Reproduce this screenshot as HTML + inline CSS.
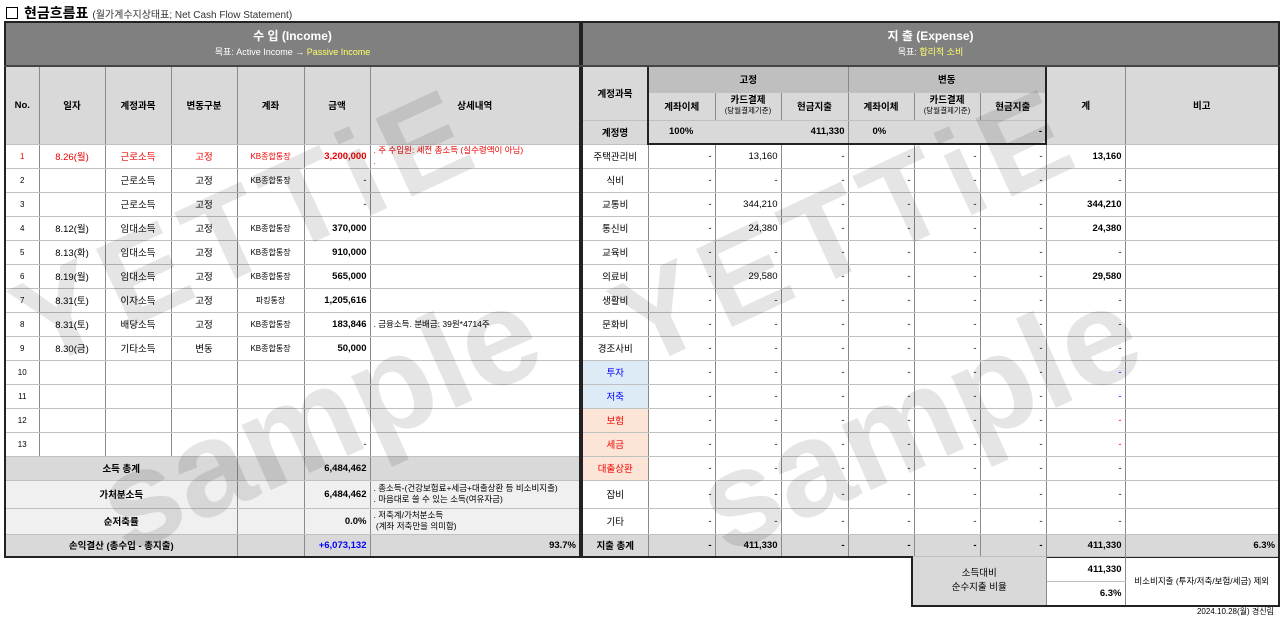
<!DOCTYPE html>
<html><head><meta charset="utf-8">
<style>
*{margin:0;padding:0;box-sizing:border-box}
body{width:1280px;height:620px;background:#fff;position:relative;overflow:hidden;font-family:"Liberation Sans","Noto Sans CJK KR",sans-serif;font-size:10px;color:#000}
.title{position:absolute;left:6px;top:3px;font-size:14px;font-weight:bold;display:flex;align-items:center}
.title .box{width:12px;height:12px;border:1.5px solid #000;margin-right:6px}
.title small{font-size:10px;font-weight:normal;color:#333;margin-left:4px}
table{position:absolute;border-collapse:collapse;table-layout:fixed;border:2px solid #222}
td{border-left:1px solid #8a8a8a;border-right:1px solid #8a8a8a;border-top:1px solid #c0c0c0;border-bottom:1px solid #c0c0c0;text-align:center;vertical-align:middle;overflow:hidden;white-space:nowrap;font-size:9.5px;padding:0 3px}
.hd{background:#808080;color:#fff;font-size:12px;font-weight:bold;line-height:16px;border-bottom:2px solid #444}
.hd span{display:block;font-size:9px;font-weight:normal}
.y{color:#ffff66}
.g{background:#d9d9d9;font-weight:bold}
.lg{background:#f0f0f0}
.r{text-align:right}
.l{text-align:left}
.b{font-weight:bold}
.red{color:#e00}
.blue{color:#00f}
.sm{font-size:8px}
.pk{background:#fce4d6;color:#e00}
.bl{background:#ddebf7;color:#00f}
.det{font-size:8.5px;text-align:left;line-height:11px}
.wm{position:absolute;left:0;top:0;pointer-events:none}
</style></head><body>
<div class="title"><div class="box"></div>현금흐름표<small>(월가계수지상태표; Net Cash Flow Statement)</small></div>

<table style="left:4px;top:21px;width:575px">
<colgroup><col style="width:34px"><col style="width:66px"><col style="width:66px"><col style="width:66px"><col style="width:67px"><col style="width:66px"><col style="width:210px"></colgroup>
<tr style="height:44px"><td colspan="7" class="hd">수 입 (Income)<span>목표: Active Income → <b class="y" style="font-weight:normal">Passive Income</b></span></td></tr>
<tr style="height:78px"><td class="g">No.</td><td class="g">일자</td><td class="g">계정과목</td><td class="g">변동구분</td><td class="g">계좌</td><td class="g">금액</td><td class="g">상세내역</td></tr>
<tr style="height:24px" class="red"><td class="sm">1</td><td>8.26(월)</td><td>근로소득</td><td>고정</td><td class="sm">KB종합통장</td><td class="r b">3,200,000</td><td class="det" style="vertical-align:top">. 주 수입원: 세전 총소득 (실수령액이 아님)<br>.</td></tr>
<tr style="height:24px"><td class="sm">2</td><td></td><td>근로소득</td><td>고정</td><td class="sm">KB종합통장</td><td class="r">-</td><td></td></tr>
<tr style="height:24px"><td class="sm">3</td><td></td><td>근로소득</td><td>고정</td><td></td><td class="r">-</td><td></td></tr>
<tr style="height:24px"><td class="sm">4</td><td>8.12(월)</td><td>임대소득</td><td>고정</td><td class="sm">KB종합통장</td><td class="r b">370,000</td><td></td></tr>
<tr style="height:24px"><td class="sm">5</td><td>8.13(화)</td><td>임대소득</td><td>고정</td><td class="sm">KB종합통장</td><td class="r b">910,000</td><td></td></tr>
<tr style="height:24px"><td class="sm">6</td><td>8.19(월)</td><td>임대소득</td><td>고정</td><td class="sm">KB종합통장</td><td class="r b">565,000</td><td></td></tr>
<tr style="height:24px"><td class="sm">7</td><td>8.31(토)</td><td>이자소득</td><td>고정</td><td class="sm">파킹통장</td><td class="r b">1,205,616</td><td></td></tr>
<tr style="height:24px"><td class="sm">8</td><td>8.31(토)</td><td>배당소득</td><td>고정</td><td class="sm">KB종합통장</td><td class="r b">183,846</td><td class="det">. 금융소득. 분배금: 39원*4714주</td></tr>
<tr style="height:24px"><td class="sm">9</td><td>8.30(금)</td><td>기타소득</td><td>변동</td><td class="sm">KB종합통장</td><td class="r b">50,000</td><td></td></tr>
<tr style="height:24px"><td class="sm">10</td><td></td><td></td><td></td><td></td><td></td><td></td></tr>
<tr style="height:24px"><td class="sm">11</td><td></td><td></td><td></td><td></td><td></td><td></td></tr>
<tr style="height:24px"><td class="sm">12</td><td></td><td></td><td></td><td></td><td></td><td></td></tr>
<tr style="height:24px"><td class="sm">13</td><td></td><td></td><td></td><td></td><td class="r">-</td><td></td></tr>
<tr style="height:24px" class="g"><td colspan="4" class="g">소득 총계</td><td class="g"></td><td class="g r">6,484,462</td><td class="g"></td></tr>
<tr style="height:28px" class="lg"><td colspan="4" class="b">가처분소득</td><td></td><td class="r b">6,484,462</td><td class="det">. 총소득-(건강보험료+세금+대출상환 등 비소비지출)<br>. 마음대로 쓸 수 있는 소득(여유자금)</td></tr>
<tr style="height:26px" class="lg"><td colspan="4" class="b">순저축률</td><td></td><td class="r b">0.0%</td><td class="det">. 저축계/가처분소득<br>&nbsp;(계좌 저축만을 의미함)</td></tr>
<tr style="height:23px"><td colspan="4" class="g">손익결산 (총수입 - 총지출)</td><td class="g"></td><td class="g r blue">+6,073,132</td><td class="g r">93.7%</td></tr>
</table>

<table style="left:581px;top:21px;width:697px">
<colgroup><col style="width:66px"><col style="width:67px"><col style="width:66px"><col style="width:67px"><col style="width:66px"><col style="width:66px"><col style="width:66px"><col style="width:79px"><col style="width:154px"></colgroup>
<tr style="height:44px"><td colspan="9" class="hd">지 출 (Expense)<span>목표: <b class="y" style="font-weight:normal">합리적 소비</b></span></td></tr>
<tr style="height:26px"><td rowspan="2" class="g">계정과목</td><td colspan="3" class="g" style="background:#bfbfbf;border-top:2px solid #222;border-left:2px solid #222">고정</td><td colspan="3" class="g" style="background:#bfbfbf;border-top:2px solid #222;border-right:2px solid #222">변동</td><td rowspan="3" class="g">계</td><td rowspan="3" class="g">비고</td></tr>
<tr style="height:28px"><td class="g" style="border-left:2px solid #222">계좌이체</td><td class="g" style="line-height:10px">카드결제<br><span style="font-size:7.5px;font-weight:normal">(당월결제기준)</span></td><td class="g">현금지출</td><td class="g">계좌이체</td><td class="g" style="line-height:10px">카드결제<br><span style="font-size:7.5px;font-weight:normal">(당월결제기준)</span></td><td class="g" style="border-right:2px solid #222">현금지출</td></tr>
<tr style="height:24px"><td class="g">계정명</td><td class="g l" style="border-left:2px solid #222;border-bottom:2px solid #222;padding-left:20px;border-right:none">100%</td><td class="g" style="border-bottom:2px solid #222;border-left:none;border-right:none"></td><td class="g r" style="border-bottom:2px solid #222;border-left:none">411,330</td><td class="g l" style="border-bottom:2px solid #222;padding-left:24px;border-right:none">0%</td><td class="g" style="border-bottom:2px solid #222;border-left:none;border-right:none"></td><td class="g r" style="border-bottom:2px solid #222;border-right:2px solid #222;border-left:none">-</td></tr>
<tr style="height:24px"><td>주택관리비</td><td class="r">-</td><td class="r">13,160</td><td class="r">-</td><td class="r">-</td><td class="r">-</td><td class="r">-</td><td class="r b">13,160</td><td></td></tr>
<tr style="height:24px"><td>식비</td><td class="r">-</td><td class="r">-</td><td class="r">-</td><td class="r">-</td><td class="r">-</td><td class="r">-</td><td class="r">-</td><td></td></tr>
<tr style="height:24px"><td>교통비</td><td class="r">-</td><td class="r">344,210</td><td class="r">-</td><td class="r">-</td><td class="r">-</td><td class="r">-</td><td class="r b">344,210</td><td></td></tr>
<tr style="height:24px"><td>통신비</td><td class="r">-</td><td class="r">24,380</td><td class="r">-</td><td class="r">-</td><td class="r">-</td><td class="r">-</td><td class="r b">24,380</td><td></td></tr>
<tr style="height:24px"><td>교육비</td><td class="r">-</td><td class="r">-</td><td class="r">-</td><td class="r">-</td><td class="r">-</td><td class="r">-</td><td class="r">-</td><td></td></tr>
<tr style="height:24px"><td>의료비</td><td class="r">-</td><td class="r">29,580</td><td class="r">-</td><td class="r">-</td><td class="r">-</td><td class="r">-</td><td class="r b">29,580</td><td></td></tr>
<tr style="height:24px"><td>생활비</td><td class="r">-</td><td class="r">-</td><td class="r">-</td><td class="r">-</td><td class="r">-</td><td class="r">-</td><td class="r">-</td><td></td></tr>
<tr style="height:24px"><td>문화비</td><td class="r">-</td><td class="r">-</td><td class="r">-</td><td class="r">-</td><td class="r">-</td><td class="r">-</td><td class="r">-</td><td></td></tr>
<tr style="height:24px"><td>경조사비</td><td class="r">-</td><td class="r">-</td><td class="r">-</td><td class="r">-</td><td class="r">-</td><td class="r">-</td><td class="r">-</td><td></td></tr>
<tr style="height:24px"><td class="bl">투자</td><td class="r">-</td><td class="r">-</td><td class="r">-</td><td class="r">-</td><td class="r">-</td><td class="r">-</td><td class="r blue">-</td><td></td></tr>
<tr style="height:24px"><td class="bl">저축</td><td class="r">-</td><td class="r">-</td><td class="r">-</td><td class="r">-</td><td class="r">-</td><td class="r">-</td><td class="r blue">-</td><td></td></tr>
<tr style="height:24px"><td class="pk">보험</td><td class="r">-</td><td class="r">-</td><td class="r">-</td><td class="r">-</td><td class="r">-</td><td class="r">-</td><td class="r red">-</td><td></td></tr>
<tr style="height:24px"><td class="pk">세금</td><td class="r">-</td><td class="r">-</td><td class="r">-</td><td class="r">-</td><td class="r">-</td><td class="r">-</td><td class="r red">-</td><td></td></tr>
<tr style="height:24px"><td class="pk">대출상환</td><td class="r">-</td><td class="r">-</td><td class="r">-</td><td class="r">-</td><td class="r">-</td><td class="r">-</td><td class="r">-</td><td></td></tr>
<tr style="height:28px"><td>잡비</td><td class="r">-</td><td class="r">-</td><td class="r">-</td><td class="r">-</td><td class="r">-</td><td class="r">-</td><td class="r">-</td><td></td></tr>
<tr style="height:26px"><td>기타</td><td class="r">-</td><td class="r">-</td><td class="r">-</td><td class="r">-</td><td class="r">-</td><td class="r">-</td><td class="r">-</td><td></td></tr>
<tr style="height:23px"><td class="g">지출 총계</td><td class="g r">-</td><td class="g r">411,330</td><td class="g r">-</td><td class="g r">-</td><td class="g r">-</td><td class="g r">-</td><td class="g r">411,330</td><td class="g r">6.3%</td></tr>
</table>

<table style="left:911px;top:556px;width:367px;border-top:none">
<colgroup><col style="width:134px"><col style="width:79px"><col style="width:154px"></colgroup>
<tr style="height:25px"><td rowspan="2" class="g" style="line-height:14px;font-weight:normal">소득대비<br>순수지출 비율</td><td class="r b">411,330</td><td rowspan="2" style="font-size:8.5px;border-right:none">비소비지출 (투자/저축/보험/세금) 제외</td></tr>
<tr style="height:24px"><td class="r b">6.3%</td></tr>
</table>
<div style="position:absolute;right:6px;top:606px;font-size:8px;color:#000">2024.10.28(월) 경신림</div>

<svg class="wm" width="1280" height="620" xmlns="http://www.w3.org/2000/svg">
<g fill="#000" fill-opacity="0.1" font-family="Liberation Sans, sans-serif" font-weight="bold">
<text font-size="125" letter-spacing="10" transform="translate(40,370) rotate(-25)">YETTiE</text>
<text font-size="135" transform="translate(125,555) rotate(-24)">sample</text>
<text font-size="125" letter-spacing="10" transform="translate(640,370) rotate(-25)">YETTiE</text>
<text font-size="135" transform="translate(725,555) rotate(-24)">sample</text>
</g>
</svg>
</body></html>
